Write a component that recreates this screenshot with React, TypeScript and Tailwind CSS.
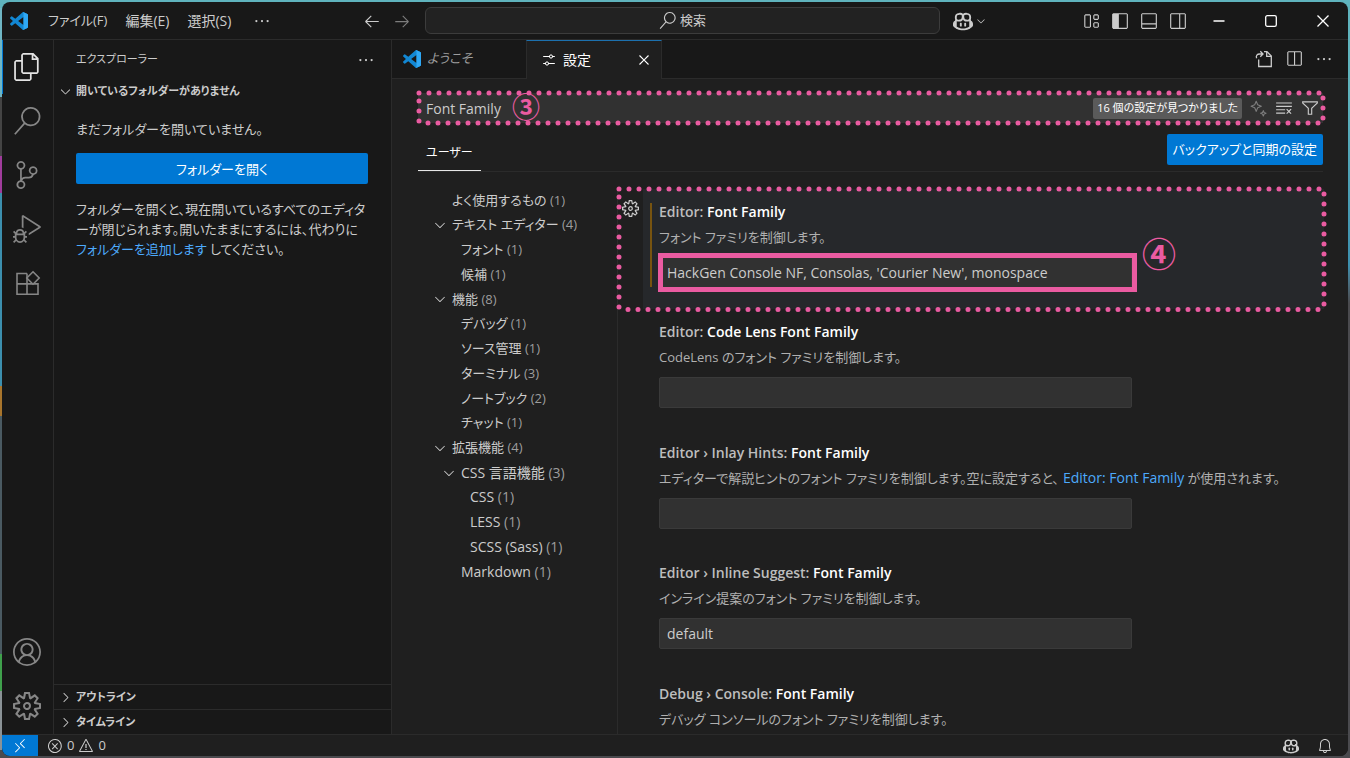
import React, { useState } from "react";
import {
  VscAccount,
  VscArrowLeft,
  VscArrowRight,
  VscBell,
  VscChevronDown,
  VscChevronRight,
  VscClearAll,
  VscClose,
  VscCopilot,
  VscDebugAlt,
  VscEllipsis,
  VscError,
  VscFiles,
  VscFilter,
  VscLayout,
  VscLayoutPanelOff,
  VscLayoutSidebarLeft,
  VscLayoutSidebarRightOff,
  VscRemote,
  VscSearch,
  VscSettings,
  VscSettingsGear,
  VscSourceControl,
  VscSplitHorizontal,
  VscWarning,
} from "react-icons/vsc";

interface TocEntry {
  label: string;
  count: number;
  indent: string;
  expandable?: boolean;
}

interface Setting {
  id: string;
  category: string;
  name: string;
  description: React.ReactNode;
  value: string;
  modified?: boolean;
}

const TOC: TocEntry[] = [
  { label: "よく使用するもの", count: 1, indent: "pl-[41px]" },
  { label: "テキスト エディター", count: 4, indent: "pl-[41px]", expandable: true },
  { label: "フォント", count: 1, indent: "pl-[50px]" },
  { label: "候補", count: 1, indent: "pl-[50px]" },
  { label: "機能", count: 8, indent: "pl-[41px]", expandable: true },
  { label: "デバッグ", count: 1, indent: "pl-[50px]" },
  { label: "ソース管理", count: 1, indent: "pl-[50px]" },
  { label: "ターミナル", count: 3, indent: "pl-[50px]" },
  { label: "ノートブック", count: 2, indent: "pl-[50px]" },
  { label: "チャット", count: 1, indent: "pl-[50px]" },
  { label: "拡張機能", count: 4, indent: "pl-[41px]", expandable: true },
  { label: "CSS 言語機能", count: 3, indent: "pl-[50px]", expandable: true },
  { label: "CSS", count: 1, indent: "pl-[59px]" },
  { label: "LESS", count: 1, indent: "pl-[59px]" },
  { label: "SCSS (Sass)", count: 1, indent: "pl-[59px]" },
  { label: "Markdown", count: 1, indent: "pl-[50px]" },
];

const SETTINGS: Setting[] = [
  {
    id: "editor-font-family",
    category: "Editor:",
    name: "Font Family",
    description: "フォント ファミリを制御します。",
    value: "HackGen Console NF, Consolas, 'Courier New', monospace",
    modified: true,
  },
  {
    id: "code-lens-font-family",
    category: "Editor:",
    name: "Code Lens Font Family",
    description: "CodeLens のフォント ファミリを制御します。",
    value: "",
  },
  {
    id: "inlay-hints-font-family",
    category: "Editor › Inlay Hints:",
    name: "Font Family",
    description: (
      <>
        エディターで解説ヒントのフォント ファミリを制御します。空に設定すると、
        <a href="#editor-font-family" className="ml-1 text-sm leading-5 text-[#4daafc]">
          Editor: Font Family
        </a>{" "}
        が使用されます。
      </>
    ),
    value: "",
  },
  {
    id: "inline-suggest-font-family",
    category: "Editor › Inline Suggest:",
    name: "Font Family",
    description: "インライン提案のフォント ファミリを制御します。",
    value: "default",
  },
  {
    id: "debug-console-font-family",
    category: "Debug › Console:",
    name: "Font Family",
    description: "デバッグ コンソールのフォント ファミリを制御します。",
    value: "default",
  },
];

function VsCodeLogo({ className }: { className: string }) {
  return (
    <svg viewBox="0 0 24 24" className={className} aria-hidden="true">
      <path
        fill="#1287d3"
        d="M23.15 2.587L18.21.21a1.494 1.494 0 0 0-1.705.29l-9.46 8.63-4.12-3.128a.999.999 0 0 0-1.276.057L.327 7.261A1 1 0 0 0 .326 8.74L3.899 12 .326 15.26a1 1 0 0 0 .001 1.479L1.65 17.94a.999.999 0 0 0 1.276.057l4.12-3.128 9.46 8.63a1.492 1.492 0 0 0 1.704.29l4.942-2.377A1.5 1.5 0 0 0 24 20.06V3.939a1.5 1.5 0 0 0-.85-1.352zm-5.146 14.861L10.826 12l7.178-5.448v10.896z"
      />
      <path
        fill="#2fa8f5"
        d="M23.15 2.587L18.21.21a1.494 1.494 0 0 0-1.705.29c.6-.4 1.5 0 1.5.9v21.2c0 .9-.9 1.3-1.5.9a1.492 1.492 0 0 0 1.704.29l4.942-2.377A1.5 1.5 0 0 0 24 20.06V3.939a1.5 1.5 0 0 0-.85-1.352z"
      />
    </svg>
  );
}

function ExtensionsIcon() {
  return (
    <svg viewBox="0 0 28 28" className="size-7" fill="none" stroke="currentColor" strokeWidth="1.6" aria-hidden="true">
      <path d="M14 4.5H4v20.7h21V14.9H4M14 4.5v20.7" />
      <path d="M20 2.8l6.2 6.2-6.2 6.2L13.8 9z" fill="#181818" />
    </svg>
  );
}

function OpenFileIcon() {
  return (
    <svg viewBox="0 0 18 18" className="size-[18px]" fill="none" stroke="currentColor" strokeWidth="1.3" aria-hidden="true">
      <path d="M3.7 9.5v7h12.6V6L12 1.7H9" />
      <path d="M11.7 1.9v4.4h4.4" />
      <path d="M1.6 8.3C.6 5.6 2.3 4 4.6 4h3.2M5.3 1.3L8 4 5.3 6.7" />
    </svg>
  );
}

function SparkleIcon() {
  return (
    <svg viewBox="0 0 17 17" className="size-[17px]" fill="none" stroke="currentColor" strokeWidth="1.1" strokeLinejoin="round" aria-hidden="true">
      <path d="M6.2 1.2l1.5 3.6 3.6 1.5-3.6 1.5-1.5 3.6-1.5-3.6-3.6-1.5 3.6-1.5z" />
      <path d="M13.3 10.6l.8 1.9 1.9.8-1.9.8-.8 1.9-.8-1.9-1.9-.8 1.9-.8z" />
    </svg>
  );
}

// Pink dotted marker drawn over a region
function DottedFrame() {
  return (
    <svg
      className="pointer-events-none absolute inset-0 z-10 h-full w-full overflow-visible"
      stroke="#ea5ba1"
      strokeWidth="5"
      strokeLinecap="round"
      strokeDasharray="0 10"
      aria-hidden="true"
    >
      <line x1="1" y1="0" x2="100%" y2="0" />
      <line x1="1" y1="8" x2="1" y2="100%" />
      <line x1="10" y1="100%" x2="100%" y2="100%" />
      <line x1="100%" y1="5" x2="100%" y2="100%" />
    </svg>
  );
}

function TitleBar() {
  return (
    <header className="flex h-[38px] shrink-0 items-center border-b border-[#2b2b2b] text-[#cccccc]">
      <div className="flex w-[423px] shrink-0 items-center pl-2">
        <VsCodeLogo className="size-[18px]" />
        <nav className="ml-5 flex items-center gap-[18px] whitespace-nowrap">
          <button>ファイル(F)</button>
          <button className="text-sm">編集(E)</button>
          <button className="text-sm">選択(S)</button>
          <button aria-label="その他" className="ml-1">
            <VscEllipsis className="size-[18px]" />
          </button>
        </nav>
        <div className="mr-[14px] ml-auto flex gap-3">
          <button aria-label="戻る">
            <VscArrowLeft className="size-[18px]" />
          </button>
          <button aria-label="進む" className="text-[#7d7d7d]">
            <VscArrowRight className="size-[18px]" />
          </button>
        </div>
      </div>
      <button className="flex h-[27px] flex-1 items-center justify-center gap-1 rounded-md border border-[#3c3c3c] bg-[#222222]">
        <VscSearch className="size-[17px]" />
        検索
      </button>
      <div className="flex w-[408px] shrink-0 items-center pl-[13px]">
        <button aria-label="Copilot" className="flex items-center">
          <VscCopilot className="size-[20px]" />
          <VscChevronDown className="ml-[2px] size-3" />
        </button>
        <div className="ml-auto flex items-center gap-[11px]">
          <button aria-label="レイアウト">
            <VscLayout className="size-[18px]" />
          </button>
          <button aria-label="サイド バー">
            <VscLayoutSidebarLeft className="size-[18px]" />
          </button>
          <button aria-label="パネル">
            <VscLayoutPanelOff className="size-[18px]" />
          </button>
          <button aria-label="セカンダリ サイド バー">
            <VscLayoutSidebarRightOff className="size-[18px]" />
          </button>
        </div>
        <div className="mr-[17px] ml-6 flex items-center gap-[36px] text-white">
          <button aria-label="最小化">
            <svg viewBox="0 0 16 16" className="size-4" stroke="currentColor" strokeWidth="1.3">
              <path d="M2.5 8h11" />
            </svg>
          </button>
          <button aria-label="最大化">
            <svg viewBox="0 0 16 16" className="size-4" fill="none" stroke="currentColor" strokeWidth="1.3">
              <rect x="2.7" y="2.7" width="10.6" height="10.6" rx="1.6" />
            </svg>
          </button>
          <button aria-label="閉じる">
            <svg viewBox="0 0 16 16" className="size-4" stroke="currentColor" strokeWidth="1.3">
              <path d="M2.5 2.5l11 11M13.5 2.5l-11 11" />
            </svg>
          </button>
        </div>
      </div>
    </header>
  );
}

function ActivityBar() {
  return (
    <nav className="relative flex w-[52px] shrink-0 flex-col items-center gap-[26px] border-r border-[#2b2b2b] pt-[13px] pr-[2px] pb-[14px] text-[#868686]">
      <span className="absolute top-0 left-0 h-[54px] w-px bg-[#0078d4]" />
      <button aria-label="エクスプローラー" className="text-[#e4e4e4]">
        <VscFiles className="size-7" />
      </button>
      <button aria-label="検索">
        <VscSearch className="size-7" />
      </button>
      <button aria-label="ソース管理">
        <VscSourceControl className="size-7" />
      </button>
      <button aria-label="実行とデバッグ">
        <VscDebugAlt className="size-7" />
      </button>
      <button aria-label="拡張機能">
        <ExtensionsIcon />
      </button>
      <button aria-label="アカウント" className="mt-auto">
        <VscAccount className="size-7" />
      </button>
      <button aria-label="管理">
        <VscSettingsGear className="size-7" />
      </button>
    </nav>
  );
}

function SideBar() {
  return (
    <aside className="flex w-[338px] shrink-0 flex-col border-r border-[#2b2b2b] text-[#cccccc]">
      <div className="flex h-[39px] items-center justify-between pr-4 pl-[22px] text-[11px]">
        <h2>エクスプローラー</h2>
        <button aria-label="その他の操作">
          <VscEllipsis className="size-[18px]" />
        </button>
      </div>
      <button className="flex h-[25px] items-center gap-[3px] pl-1 text-[11px] font-bold">
        <VscChevronDown className="size-[15px]" />
        開いているフォルダーがありません
      </button>
      <div className="pt-[15px] pr-[23px] pl-[22px] leading-5 whitespace-nowrap">
        <p>まだフォルダーを開いていません。</p>
        <button className="mt-[14px] h-[31px] w-full rounded-xs bg-[#0078d4] text-white">フォルダーを開く</button>
        <p className="mt-[15px]">
          フォルダーを開くと、現在開いているすべてのエディタ
          <br />
          ーが閉じられます。開いたままにするには、代わりに
          <br />
          <a href="#add-folder" className="text-[#4daafc]">
            フォルダーを追加します
          </a>{" "}
          してください。
        </p>
      </div>
      <div className="mt-auto text-[11px] font-bold">
        <button className="flex h-[25px] w-full items-center gap-[3px] border-t border-[#2b2b2b] pl-1">
          <VscChevronRight className="size-[15px]" />
          アウトライン
        </button>
        <button className="flex h-[25px] w-full items-center gap-[3px] border-t border-[#2b2b2b] pl-1">
          <VscChevronRight className="size-[15px]" />
          タイムライン
        </button>
      </div>
    </aside>
  );
}

function EditorTabs() {
  return (
    <div className="flex h-[39px] shrink-0 items-stretch bg-[#181818]">
      <button className="flex w-[134px] items-center gap-[6px] border-b border-[#2b2b2b] pl-[11px] text-[#9d9d9d] italic">
        <VsCodeLogo className="size-[18px]" />
        ようこそ
      </button>
      <div className="flex w-[136px] items-center border-x border-t border-x-[#2b2b2b] border-t-[#1c70ae] bg-[#1f1f1f] pr-2 pl-[14px] text-white">
        <VscSettings className="size-4" />
        <span className="ml-[6px] text-sm">設定</span>
        <button aria-label="タブを閉じる" className="ml-auto">
          <VscClose className="size-[18px]" />
        </button>
      </div>
      <div className="flex flex-1 items-center justify-end gap-3 border-b border-[#2b2b2b] pr-[15px] text-[#cccccc]">
        <button aria-label="設定 (JSON) を開く">
          <OpenFileIcon />
        </button>
        <button aria-label="エディターを分割">
          <VscSplitHorizontal className="size-[18px]" />
        </button>
        <button aria-label="その他の操作">
          <VscEllipsis className="size-[18px]" />
        </button>
      </div>
    </div>
  );
}

function SettingRow({ setting }: { setting: Setting }) {
  const [value, setValue] = useState(setting.value);

  return (
    <div className={setting.modified ? "relative min-h-0 flex-1" : "min-h-0 flex-1"}>
      <div className="flex h-full">
        <div className="w-[25px] shrink-0 pt-[11px] pl-1">
          {setting.modified && (
            <button aria-label="その他の操作" className="text-[#cccccc]">
              <VscSettingsGear className="size-[17px]" />
            </button>
          )}
        </div>
        <div className={setting.modified ? "h-full flex-1 bg-[#26282b] pt-[14px] pl-[7px]" : "h-full flex-1 pt-[14px] pl-[7px]"}>
          <div className={setting.modified ? "h-[84px] border-l-2 border-[#785410] pl-[7px]" : "h-[84px] pl-[9px]"}>
            <label htmlFor={setting.id} className="block h-[18px] text-sm leading-[18px] font-semibold text-[#bdbdbd]">
              {setting.category} <span className="text-white">{setting.name}</span>
            </label>
            <p className="mt-[6px] h-5 leading-5 whitespace-nowrap text-[#b0b0b0]">{setting.description}</p>
            <input
              id={setting.id}
              value={value}
              onChange={(e) => setValue(e.target.value)}
              className="mt-[10px] block h-[31px] w-[473px] rounded-xs border border-[#3a3a3a] bg-[#313131] px-[7px] text-sm text-[#cccccc] outline-none"
            />
          </div>
        </div>
      </div>
      {setting.modified && (
        <>
          <DottedFrame />
          <span className="pointer-events-none absolute top-[64px] left-10 h-[39px] w-[479px] border-5 border-[#ea5ba1]" />
          <span className="absolute top-[45px] left-[524px] text-[34px] leading-10 font-bold text-[#ea5ba1]">④</span>
        </>
      )}
    </div>
  );
}

function SettingsEditor() {
  const [query, setQuery] = useState("Font Family");

  return (
    <main className="flex min-w-0 flex-1 flex-col bg-[#1f1f1f]">
      <EditorTabs />
      <div className="shrink-0 pt-[14px] pr-[25px] pl-[26px]">
        <div className="relative flex h-[30px] items-center gap-2 bg-[#313131] pr-1 pl-2 text-[#cccccc]">
          <input
            aria-label="設定の検索"
            value={query}
            onChange={(e) => setQuery(e.target.value)}
            className="min-w-0 flex-1 bg-transparent pt-[2px] text-sm outline-none"
          />
          <span className="flex h-[21px] items-center rounded-xs bg-[#5a5a5a] px-1 text-[11px] text-white">
            16 個の設定が見つかりました
          </span>
          <button aria-label="AI で検索" className="text-[#7d7d7d]">
            <SparkleIcon />
          </button>
          <button aria-label="検索入力のクリア">
            <VscClearAll className="size-[18px]" />
          </button>
          <button aria-label="フィルター">
            <VscFilter className="size-[18px]" />
          </button>
          <DottedFrame />
          <span className="absolute top-0 left-[94px] text-[28px] leading-7 font-bold text-[#ea5ba1]">③</span>
        </div>
        <div className="flex h-[49px] items-end justify-between border-b border-[#2b2b2b]">
          <button className="h-[36px] border-b border-[#e7e7e7] px-2 text-xs text-white">ユーザー</button>
          <button className="mb-[6px] h-[31px] rounded-xs bg-[#0078d4] px-[6px] text-white">バックアップと同期の設定</button>
        </div>
      </div>
      <div className="mt-2 flex min-h-0 flex-1 overflow-hidden pr-6 pl-[19px]">
        <ul className="mt-2 flex h-[396px] w-[206px] shrink-0 flex-col text-[#cccccc]">
          {TOC.map((entry) => (
            <li key={entry.label} className={`flex min-h-0 flex-1 items-center ${entry.indent}`}>
              {entry.expandable && <VscChevronDown className="mr-1 -ml-5 size-4" />}
              <button className={/^[A-Z]/.test(entry.label) ? "text-sm whitespace-nowrap" : "whitespace-nowrap"}>
                {entry.label} <span className="text-[#9d9d9d]">({entry.count})</span>
              </button>
            </li>
          ))}
        </ul>
        <div className="mt-[9px] min-w-0 flex-1 border-l border-[#2b2b2b]">
          <div className="flex h-[602px] flex-col">
            {SETTINGS.map((s) => (
              <SettingRow key={s.id} setting={s} />
            ))}
          </div>
        </div>
      </div>
    </main>
  );
}

function StatusBar() {
  return (
    <footer className="flex h-[22px] shrink-0 items-center border-t border-[#2b2b2b] bg-[#1f1f1f] text-[#cccccc]">
      <button aria-label="リモート" className="flex h-full w-9 items-center justify-center bg-[#0078d4] text-white">
        <VscRemote className="size-4" />
      </button>
      <button className="ml-[9px] flex items-center gap-1">
        <VscError className="size-4" />
        <span>0</span>
        <VscWarning className="size-4" />
        <span>0</span>
      </button>
      <div className="mr-[15px] ml-auto flex items-center gap-[18px]">
        <button aria-label="Copilot">
          <VscCopilot className="size-4" />
        </button>
        <button aria-label="通知">
          <VscBell className="size-4" />
        </button>
      </div>
    </footer>
  );
}

export default function App() {
  return (
    <div className="relative h-screen bg-linear-to-b from-[#5fb3bd] from-12% via-[#3c8fae] via-35% to-[#4a4a4e] to-40% p-[2px] font-['Open_Sans','Noto_Sans_CJK_JP',sans-serif] text-[13px] [font-feature-settings:'palt']">
      {/* Sliver of the desktop visible left of the window */}
      <span className="absolute inset-y-2 left-0 w-[2px] bg-[linear-gradient(#6fb6c4_0_12%,#444_12%_20%,#a03c9c_20%_25%,#3c8fae_25%_51%,#a8752c_51%_55%,#4a5a62_55%_87%,#3fa04c_87%_92%,#8a9296_92%)]" />
      <div className="flex h-full flex-col overflow-hidden rounded-lg bg-[#181818]">
        <TitleBar />
        <div className="flex min-h-0 flex-1">
          <ActivityBar />
          <SideBar />
          <SettingsEditor />
        </div>
        <StatusBar />
      </div>
    </div>
  );
}
